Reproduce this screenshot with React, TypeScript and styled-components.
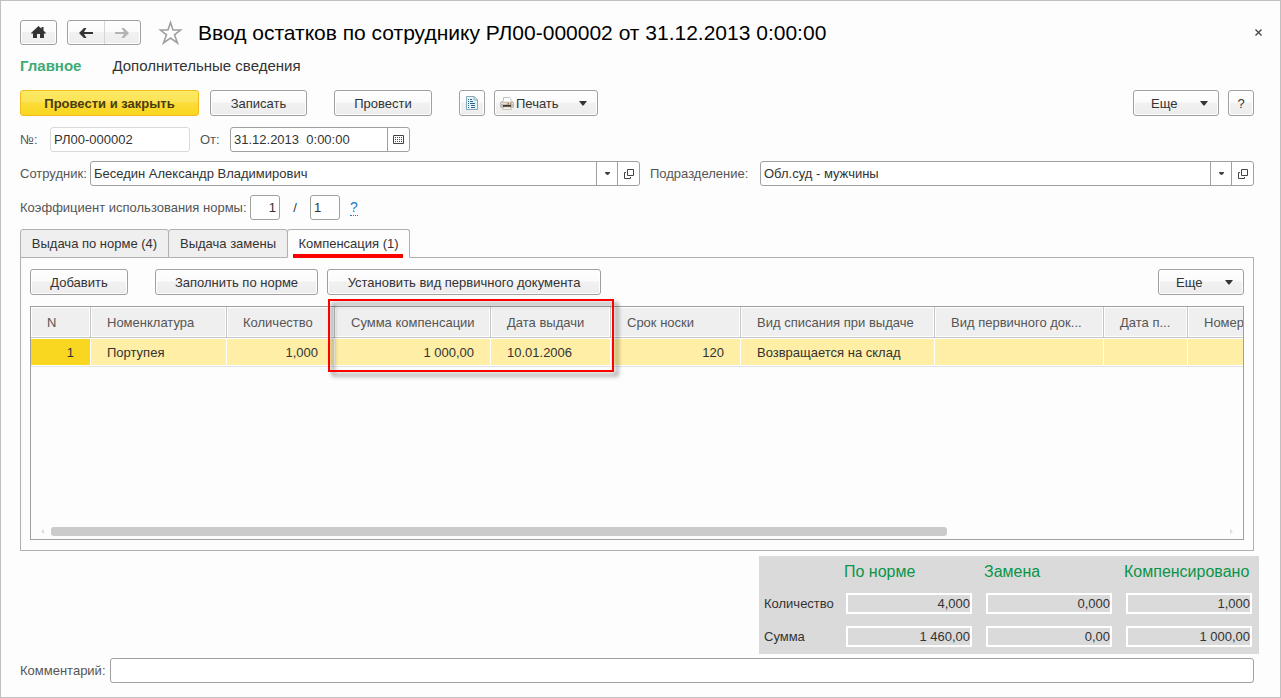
import React from "react";
import styled, { createGlobalStyle, css } from "styled-components";

const GlobalStyle = createGlobalStyle`
  *, *::before, *::after { box-sizing: border-box; }
  body { margin: 0; background: #fff; }
  body, button, input, table { font-family: "Liberation Sans", Arial, sans-serif; font-size: 13px; color: #333; }
  button, input { margin: 0; padding: 0; outline: none; }
  button { cursor: pointer; }
`;

const Window = styled.main`
  min-height: 100vh;
  display: flex;
  flex-direction: column;
  padding: 19px 26px 14px 19px;
  border: 1px solid #c0c0c0;
  background: #fdfdfd;
`;

const TitleBar = styled.header`
  display: flex;
  align-items: center;
  height: 25px;
`;

const Title = styled.h1`
  flex: 1;
  margin: 0 0 0 15px;
  font-size: 21px;
  font-weight: 400;
  line-height: 24px;
  white-space: nowrap;
  color: #000;
`;

const raised = css`
  border: 1px solid #a0a0a0;
  border-radius: 3px;
  background: linear-gradient(#fefefe 0, #fbfbfb 46%, #f1f1f1 50%, #ededed 100%);
  box-shadow: inset 0 0 0 1px #fff;
`;

const HomeButton = styled.button`
  ${raised}
  display: grid;
  place-items: center;
  width: 37px;
  height: 25px;
`;

const HistoryGroup = styled.div`
  ${raised}
  display: flex;
  width: 74px;
  height: 25px;
  margin: 0 17px 0 10px;
`;

const HistoryButton = styled.button`
  flex: 1;
  display: grid;
  place-items: center;
  border: 0;
  background: none;
  & + & { border-left: 1px solid #d4d4d4; }
`;

const PlainButton = styled.button`
  display: grid;
  place-items: center;
  border: 0;
  background: none;
`;

const CloseButton = styled(PlainButton)`
  width: 17px;
  height: 17px;
  margin-right: -13px;
`;

const SectionNav = styled.nav`
  display: flex;
  gap: 31px;
  margin-top: 11px;
  line-height: 20px;
`;

const SectionLink = styled.a<{ $active?: boolean }>`
  font-size: 15px;
  text-decoration: none;
  color: ${(p) => (p.$active ? "#3fab74" : "#333")};
  font-weight: ${(p) => (p.$active ? 700 : 400)};
`;

const CommandBar = styled.div`
  display: flex;
  margin-top: 14px;
`;

const Spacer = styled.div<{ $width?: number }>`
  flex: ${(p) => (p.$width ? `0 0 ${p.$width}px` : "1")};
`;

const Button = styled.button<{ $width: number; $primary?: boolean }>`
  ${raised}
  display: flex;
  align-items: center;
  justify-content: center;
  width: ${(p) => p.$width}px;
  height: 26px;
  white-space: nowrap;
  ${(p) =>
    p.$primary &&
    css`
      border-color: #f0bd1c;
      background: linear-gradient(#fde964 0, #fbe356 46%, #fbdb38 50%, #fad61f 100%);
      box-shadow: none;
      font-weight: 700;
      color: #4a3c10;
    `}
`;

const MenuButton = styled(Button)`
  justify-content: space-between;
  padding: 0 10px 0 ${(p) => (p.$width > 90 ? 5 : 17)}px;
`;

const IconText = styled.span`
  display: flex;
  align-items: center;
  gap: 2px;
`;

const Fields = styled.div`
  display: flex;
  flex-direction: column;
  gap: 9px;
  margin: 11px 0 9px;
`;

const FieldRow = styled.div`
  display: flex;
  align-items: center;
  height: 25px;
`;

const PartyRow = styled.div`
  display: grid;
  grid-template-columns: 70px 550fr 120px 494fr;
  align-items: center;
  height: 25px;
`;

const Label = styled.label<{ $width?: number; $indent?: number }>`
  flex: none;
  width: ${(p) => (p.$width ? `${p.$width}px` : "auto")};
  padding-left: ${(p) => p.$indent ?? 0}px;
  white-space: nowrap;
  color: #555;
`;

const Input = styled.input<{ $width?: number; $align?: string; $muted?: boolean }>`
  width: ${(p) => (p.$width ? `${p.$width}px` : "100%")};
  height: 25px;
  padding: 0 3px;
  border: 1px solid ${(p) => (p.$muted ? "#d9d9d9" : "#a0a0a0")};
  border-radius: 3px;
  background: #fff;
  text-align: ${(p) => p.$align ?? "left"};
`;

const Combo = styled.div<{ $width?: number }>`
  display: flex;
  width: ${(p) => (p.$width ? `${p.$width}px` : "auto")};
  min-width: 0;
  height: 25px;
  border: 1px solid #a0a0a0;
  border-radius: 3px;
  background: #fff;
`;

const ComboInput = styled.input`
  flex: 1;
  min-width: 0;
  padding: 0 3px;
  border: 0;
  background: none;
`;

const ComboButton = styled.button`
  display: grid;
  place-items: center;
  width: 21px;
  border: 0;
  border-left: 1px solid #a0a0a0;
  background: none;
  &:last-child { width: 22px; }
`;

const Slash = styled.span`
  width: 30px;
  text-align: center;
`;

const HelpLink = styled.a`
  margin-left: 10px;
  border-bottom: 1px dotted #1a7ac4;
  font-size: 14px;
  line-height: 15px;
  text-decoration: none;
  color: #1a7ac4;
`;

const TabList = styled.div`
  display: flex;
  margin-bottom: -1px;
`;

const Tab = styled.button<{ $width: number; $active?: boolean }>`
  position: relative;
  width: ${(p) => p.$width}px;
  height: 29px;
  border: 1px solid #b0b0b0;
  border-bottom-color: ${(p) => (p.$active ? "#fdfdfd" : "#b0b0b0")};
  border-radius: 3px 3px 0 0;
  background: ${(p) => (p.$active ? "#fdfdfd" : "#efefef")};
  white-space: nowrap;
  & + & { margin-left: -1px; }
`;

const RedUnderline = styled.span`
  position: absolute;
  right: 6px;
  bottom: -1px;
  left: 5px;
  height: 4px;
  background: #f00;
`;

const Panel = styled.section`
  flex: 1;
  display: flex;
  flex-direction: column;
  padding: 11px 9px 10px;
  border: 1px solid #b0b0b0;
`;

const PanelBar = styled.div`
  display: flex;
  margin-bottom: 11px;
`;

const GridFrame = styled.div`
  position: relative;
  flex: 1;
  display: flex;
  flex-direction: column;
  border: 1px solid #a0a0a0;
`;

const GridViewport = styled.div`
  flex: 1;
  min-height: 120px;
  overflow: hidden;
`;

const DataTable = styled.table`
  width: 1257px;
  table-layout: fixed;
  border-collapse: separate;
  border-spacing: 0;
`;

const HeadCell = styled.th`
  height: 31px;
  padding: 0 0 0 16px;
  border-right: 1px solid #c6c6c6;
  border-bottom: 1px solid #c6c6c6;
  background: #efefef;
  box-shadow: inset 0 0 0 1px #fff;
  font-weight: 400;
  text-align: left;
  white-space: nowrap;
  overflow: hidden;
  color: #555;
`;

const BodyCell = styled.td<{ $right?: boolean; $current?: boolean }>`
  height: 28px;
  padding: 0 16px;
  border-top: 1px solid #fff;
  border-right: 1px solid #fff;
  border-bottom: 1px solid #fff;
  background: ${(p) => (p.$current ? "#f9d61f" : "#feeea6")};
  box-shadow: 0 1px 0 #e4e4e4;
  text-align: ${(p) => (p.$right ? "right" : "left")};
  white-space: nowrap;
  overflow: hidden;
`;

const ScrollBar = styled.div`
  display: flex;
  align-items: center;
  gap: 7px;
  height: 9px;
  margin: 0 9px 3px;
`;

const ScrollTrack = styled.div`
  flex: 1;
  display: grid;
  grid-template-columns: 896fr 276fr;
`;

const ScrollThumb = styled.div`
  height: 9px;
  border-radius: 3px;
  background: #cbcbcb;
`;

const Highlight = styled.div`
  position: absolute;
  top: -8px;
  left: 297px;
  width: 286px;
  height: 73px;
  border: 2px solid #f00;
  filter: drop-shadow(4px 4px 2px rgba(0, 0, 0, 0.5));
  pointer-events: none;
`;

const Totals = styled.section`
  align-self: flex-end;
  display: grid;
  grid-template-columns: 80px 140px 140px 135px;
  grid-template-rows: 32px 30px 36px;
  align-items: center;
  margin: 5px -5px 4px 0;
  padding-left: 5px;
  background: #dadada;
`;

const TotalsHead = styled.span`
  font-size: 16px;
  white-space: nowrap;
  color: #0b9448;
`;

const TotalInput = styled.input`
  width: 126px;
  height: 21px;
  margin-left: 2px;
  border: 2px solid #fff;
  background: #dadada;
  text-align: right;
`;

const CommentInput = styled(Input)`
  flex: 1;
  min-width: 0;
`;

const Caret = ({ small }: { small?: boolean }) =>
  small ? (
    <svg width="5" height="3" viewBox="0 0 5 3"><path d="M0 0H5V1L3 3H2L0 1Z" fill="#444" /></svg>
  ) : (
    <svg width="8" height="5" viewBox="0 0 8 5"><path d="M0 0H8L4.500 4.500H3.500Z" fill="#333" /></svg>
  );

const OpenIcon = () => (
  <svg width="10" height="10" viewBox="0 0 10 10" fill="none" stroke="#444">
    <path d="M3.500 .5H9.500V6.500H3.500Z" />
    <path d="M2 3.500H.5V9.500H6.500V8" />
  </svg>
);

const CalendarIcon = () => (
  <svg width="11" height="9" viewBox="0 0 11 9" fill="none" stroke="#444">
    <path d="M.5 .5H10.500V8.500H.5Z" />
    <path d="M2 2.500H9M2 4.500H9M2 6.500H9" strokeDasharray="1 1" />
  </svg>
);

const HomeIcon = () => (
  <svg width="15" height="13" viewBox="0 0 15 13">
    <path d="M7.500 0L10.500 2.700V1H12.500V4.500L15 7V7.500H13V12H9V8H6V12H2V7.500H0V7Z" fill="#333" />
  </svg>
);

const ArrowIcon = ({ forward }: { forward?: boolean }) => (
  <svg width="14" height="10" viewBox="0 0 14 10">
    <path
      d={forward ? "M0 4H9L6.500 0H9L14 5L9 10H6.500L9 6H0Z" : "M14 4H5L7.500 0H5L0 5L5 10H7.500L5 6H14Z"}
      fill={forward ? "#b3b3b3" : "#333"}
    />
  </svg>
);

const StarIcon = () => (
  <svg width="25" height="25" viewBox="0 0 25 25">
    <path
      d="M12.500 2.500L15 10H22.500L16.500 14.800L19.500 23L12.500 18L5.500 23L8.500 14.800L2.500 10H10Z"
      fill="#fff"
      stroke="#a0a0a0"
      strokeWidth="1.600"
    />
  </svg>
);

const CloseIcon = () => (
  <svg width="7" height="7" viewBox="0 0 7 7" stroke="#444" strokeWidth="1.300">
    <path d="M.5 .5L6.500 6.500M6.500 .5L.5 6.500" />
  </svg>
);

const ReportIcon = () => (
  <svg width="12" height="14" viewBox="0 0 12 14">
    <path d="M.5 .5H8L11.500 4V13.500H.5Z" fill="#e4f2fa" stroke="#86a9bd" />
    <path d="M8 .5V4H11.500Z" fill="#fff" stroke="#86a9bd" />
    <path d="M2 3.500H3M2 5.500H3M2 7.500H3M2 9.500H3M2 11.500H3M4 3.500H6M4 5.500H7M4 7.500H9M5 9.500H9M5 11.500H9" stroke="#2d6487" />
  </svg>
);

const PrinterIcon = () => (
  <svg width="14" height="13" viewBox="0 0 14 13">
    <path d="M3.500 5V.5H9.500L11 2V5" fill="#fff" stroke="#c2c2c2" />
    <path d="M1.500 4H12.500L14 5.500V10L13 11H1L0 10V5.500Z" fill="#c4bdb6" />
    <path d="M3 4H11V5H3Z" fill="#eeebe8" />
    <path d="M1 6H13V7H1Z" fill="#e6e0da" />
    <path d="M3 8H11V10H3Z" fill="#3f3936" />
    <path d="M7.500 6H9V7.500H7.500Z" fill="#d9503f" />
    <path d="M10 6H11.500V7.500H10Z" fill="#7fae5c" />
    <path d="M3.500 10H10.500L11.500 12.500H2.500Z" fill="#fbf6ee" stroke="#bcae9f" strokeWidth=".7" />
  </svg>
);

const ScrollArrow = ({ right }: { right?: boolean }) => (
  <svg width="4" height="5" viewBox="0 0 4 5">
    <path d={right ? "M0 0L3 2.500L0 5Z" : "M4 0L1 2.500L4 5Z"} fill="#dcdcdc" />
  </svg>
);

type Column = { title: string; width: number; value: string; right?: boolean };

const columns: Column[] = [
  { title: "N", width: 60, value: "1", right: true },
  { title: "Номенклатура", width: 136, value: "Портупея" },
  { title: "Количество", width: 108, value: "1,000", right: true },
  { title: "Сумма компенсации", width: 156, value: "1 000,00", right: true },
  { title: "Дата выдачи", width: 120, value: "10.01.2006" },
  { title: "Срок носки", width: 130, value: "120", right: true },
  { title: "Вид списания при выдаче", width: 194, value: "Возвращается на склад" },
  { title: "Вид первичного док...", width: 169, value: "" },
  { title: "Дата п...", width: 84, value: "" },
  { title: "Номер", width: 100, value: "" },
];

const totals = [
  { id: "quantity", title: "Количество", values: ["4,000", "0,000", "1,000"] },
  { id: "sum", title: "Сумма", values: ["1 460,00", "0,00", "1 000,00"] },
];

const totalHeads = ["По норме", "Замена", "Компенсировано"];

const ReferenceField = ({ id, value }: { id: string; value: string }) => (
  <Combo>
    <ComboInput id={id} defaultValue={value} />
    <ComboButton type="button" aria-label="Выбрать"><Caret small /></ComboButton>
    <ComboButton type="button" aria-label="Открыть"><OpenIcon /></ComboButton>
  </Combo>
);

export default function App() {
  return (
    <>
      <GlobalStyle />
      <Window>
        <TitleBar>
          <HomeButton type="button" aria-label="Начальная страница"><HomeIcon /></HomeButton>
          <HistoryGroup>
            <HistoryButton type="button" aria-label="Назад"><ArrowIcon /></HistoryButton>
            <HistoryButton type="button" aria-label="Вперед"><ArrowIcon forward /></HistoryButton>
          </HistoryGroup>
          <PlainButton type="button" aria-label="В избранное"><StarIcon /></PlainButton>
          <Title>Ввод остатков по сотруднику РЛ00-000002 от 31.12.2013 0:00:00</Title>
          <CloseButton type="button" aria-label="Закрыть"><CloseIcon /></CloseButton>
        </TitleBar>

        <SectionNav>
          <SectionLink href="#main" $active>Главное</SectionLink>
          <SectionLink href="#extra">Дополнительные сведения</SectionLink>
        </SectionNav>

        <CommandBar>
          <Button type="button" $width={179} $primary>Провести и закрыть</Button>
          <Spacer $width={11} />
          <Button type="button" $width={97}>Записать</Button>
          <Spacer $width={27} />
          <Button type="button" $width={98}>Провести</Button>
          <Spacer $width={27} />
          <Button type="button" $width={26} aria-label="Отчет"><ReportIcon /></Button>
          <Spacer $width={9} />
          <MenuButton type="button" $width={104}>
            <IconText><PrinterIcon />Печать</IconText>
            <Caret />
          </MenuButton>
          <Spacer />
          <MenuButton type="button" $width={86}>Еще<Caret /></MenuButton>
          <Spacer $width={9} />
          <Button type="button" $width={26}>?</Button>
        </CommandBar>

        <Fields>
          <FieldRow>
            <Label htmlFor="number" $width={30}>№:</Label>
            <Input id="number" $width={140} $muted defaultValue="РЛ00-000002" />
            <Label htmlFor="date" $width={40} $indent={10}>От:</Label>
            <Combo $width={180}>
              <ComboInput id="date" defaultValue="31.12.2013  0:00:00" />
              <ComboButton type="button" aria-label="Календарь"><CalendarIcon /></ComboButton>
            </Combo>
          </FieldRow>
          <PartyRow>
            <Label htmlFor="employee">Сотрудник:</Label>
            <ReferenceField id="employee" value="Беседин Александр Владимирович" />
            <Label htmlFor="department" $indent={10}>Подразделение:</Label>
            <ReferenceField id="department" value="Обл.суд - мужчины" />
          </PartyRow>
          <FieldRow>
            <Label htmlFor="ratio" $width={230}>Коэффициент использования нормы:</Label>
            <Input id="ratio" $width={30} $align="right" defaultValue="1" />
            <Slash>/</Slash>
            <Input aria-label="Знаменатель" $width={30} defaultValue="1" />
            <HelpLink href="#help">?</HelpLink>
          </FieldRow>
        </Fields>

        <TabList role="tablist">
          <Tab type="button" role="tab" $width={149}>Выдача по норме (4)</Tab>
          <Tab type="button" role="tab" $width={120}>Выдача замены</Tab>
          <Tab type="button" role="tab" aria-selected $width={123} $active>
            Компенсация (1)
            <RedUnderline />
          </Tab>
        </TabList>

        <Panel>
          <PanelBar>
            <Button type="button" $width={98}>Добавить</Button>
            <Spacer $width={27} />
            <Button type="button" $width={163}>Заполнить по норме</Button>
            <Spacer $width={9} />
            <Button type="button" $width={274}>Установить вид первичного документа</Button>
            <Spacer />
            <MenuButton type="button" $width={86}>Еще<Caret /></MenuButton>
          </PanelBar>

          <GridFrame>
            <GridViewport>
              <DataTable>
                <colgroup>
                  {columns.map((c) => <col key={c.title} width={c.width} />)}
                </colgroup>
                <thead>
                  <tr>{columns.map((c) => <HeadCell key={c.title} scope="col">{c.title}</HeadCell>)}</tr>
                </thead>
                <tbody>
                  <tr>
                    {columns.map((c, i) => (
                      <BodyCell key={c.title} $right={c.right} $current={i === 0}>{c.value}</BodyCell>
                    ))}
                  </tr>
                </tbody>
              </DataTable>
            </GridViewport>
            <ScrollBar>
              <ScrollArrow />
              <ScrollTrack><ScrollThumb /></ScrollTrack>
              <ScrollArrow right />
            </ScrollBar>
            <Highlight />
          </GridFrame>
        </Panel>

        <Totals>
          <span />
          {totalHeads.map((h, i) => <TotalsHead key={h} id={`head-${i}`}>{h}</TotalsHead>)}
          {totals.map((row) => (
            <React.Fragment key={row.id}>
              <span id={row.id}>{row.title}</span>
              {row.values.map((v, i) => (
                <TotalInput key={i} readOnly aria-labelledby={`${row.id} head-${i}`} value={v} />
              ))}
            </React.Fragment>
          ))}
        </Totals>

        <FieldRow>
          <Label htmlFor="comment" $width={90}>Комментарий:</Label>
          <CommentInput id="comment" />
        </FieldRow>
      </Window>
    </>
  );
}
